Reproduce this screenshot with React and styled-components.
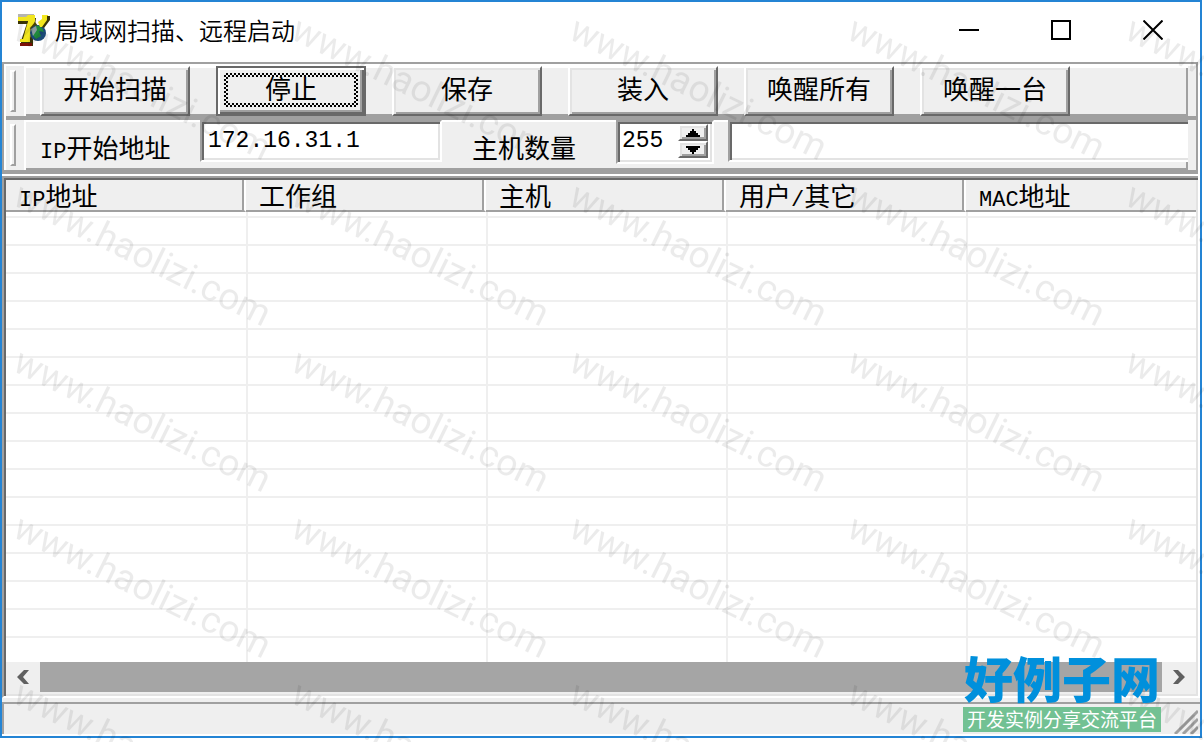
import { useState } from "react";
import styled, { createGlobalStyle, css } from "styled-components";

const commands = ["开始扫描", "停止", "保存", "装入", "唤醒所有", "唤醒一台"];

const columns = [
  { latin: "IP", text: "地址" },
  { text: "工作组" },
  { text: "主机" },
  { text: "用户", latin: "/", after: "其它" },
  { latin: "MAC", text: "地址" },
];

const rows = Array.from({ length: 15 }, (_, i) => i);

const AppIcon = () => (
  <svg width="32" height="32" viewBox="0 0 32 32" aria-hidden="true">
    <path d="M0 0H16V6H0Z" fill="#b5b5b0" />
    <path d="M0 4H18L15 26H15V32H3V27L9 9H0Z" fill="#3a3505" />
    <path d="M0 3H8L10 1H17V7L12 24L12 28H2V25H5L10 7H0Z" fill="#f2e61e" />
    <path d="M0 7H10L9 10H0Z" fill="#3a3505" />
    <path d="M2 29H14V32H2Z" fill="#7c1008" />
    <path d="M12 14L17 8L20 12L14 20Z" fill="#4a4408" />
    <circle cx="20" cy="19" r="8" fill="#1c4a78" />
    <path d="M15 14Q20 9 24 14L26 18L21 17L23 22L18 25L14 20L18 17Z" fill="#1f8a3c" />
    <path d="M13 15L18 12L19 16L15 22Z" fill="#8a9ba0" />
    <path d="M24 1H30V5L25 13H22L20 8L24 5Z" fill="#f2e61e" />
    <path d="M29 2H32V6L26 14L24 13L29 6Z" fill="#3a3505" />
  </svg>
);

const App = () => {
  const [active, setActive] = useState("停止");
  const [startIp, setStartIp] = useState("172.16.31.1");
  const [count, setCount] = useState(255);
  const [filter, setFilter] = useState("");

  return (
    <Page>
      <GlobalStyle />
      <Window>
        <TitleBar>
          <AppIcon />
          <Title>局域网扫描、远程启动</Title>
          <CaptionButton aria-label="最小化">
            <svg width="20" height="20"><path d="M0 10H20" stroke="#000" strokeWidth="2" /></svg>
          </CaptionButton>
          <CaptionButton aria-label="最大化">
            <svg width="20" height="20"><path d="M1 1H19V19H1Z" fill="none" stroke="#000" strokeWidth="2" /></svg>
          </CaptionButton>
          <CaptionButton aria-label="关闭">
            <svg width="20" height="20"><path d="M0.500 0.500L19.500 19.500M19.500 0.500L0.500 19.500" stroke="#000" strokeWidth="2" /></svg>
          </CaptionButton>
        </TitleBar>

        <CoolBar>
          <Band>
            <GripCell><Grip /></GripCell>
            <BandBody>
              <Buttons>
                {commands.map((name) => (
                  <Command key={name} $active={name === active} onClick={() => setActive(name)}>
                    <span>{name}</span>
                  </Command>
                ))}
              </Buttons>
            </BandBody>
          </Band>
          <Band>
            <GripCell><Grip /></GripCell>
            <BandBody>
              <Label htmlFor="start-ip" $width={160}><Latin>IP</Latin>开始地址</Label>
              <TextBox id="start-ip" value={startIp} onChange={(ev) => setStartIp(ev.target.value)} />
              <Label htmlFor="host-count" $width={142} $gap={30}>主机数量</Label>
              <SpinBox>
                <SpinInput id="host-count" value={count} onChange={(ev) => setCount(Number(ev.target.value) || 0)} />
                <SpinButtons>
                  <SpinButton aria-label="增加" onClick={() => setCount(count + 1)}>
                    <svg width="14" height="8"><path d="M6 0H8V2H10V4H12V6H14V8H0V6H2V4H4V2H6Z" /></svg>
                  </SpinButton>
                  <SpinButton aria-label="减少" onClick={() => setCount(count - 1)}>
                    <svg width="14" height="8"><path d="M0 0H14V2H12V4H10V6H8V8H6V6H4V4H2V2H0Z" /></svg>
                  </SpinButton>
                </SpinButtons>
              </SpinBox>
              <WideBox aria-label="状态" value={filter} onChange={(ev) => setFilter(ev.target.value)} />
            </BandBody>
          </Band>
        </CoolBar>

        <ListView>
          <Table>
            <colgroup>
              <col width="240" /><col width="240" /><col width="240" /><col width="240" /><col />
            </colgroup>
            <thead>
              <tr>
                {columns.map((col, i) => (
                  <HeadCell key={i}>
                    {col.after && col.text}
                    {col.latin && <Latin>{col.latin}</Latin>}
                    {col.after || col.text}
                  </HeadCell>
                ))}
              </tr>
            </thead>
            <tbody>
              <Row $height={6}>{columns.map((_, i) => <Cell key={i} />)}</Row>
              {rows.map((row) => (
                <Row key={row} $height={28}>{columns.map((_, i) => <Cell key={i} />)}</Row>
              ))}
              <Row $height={24} $last>{columns.map((_, i) => <Cell key={i} />)}</Row>
            </tbody>
          </Table>
          <ScrollBar>
            <ScrollButton aria-label="向左滚动">
              <svg width="12" height="14"><path d="M12 0H7L0 7L7 14H12L6 7Z" fill="#606060" /></svg>
            </ScrollButton>
            <Thumb />
            <ScrollButton aria-label="向右滚动">
              <svg width="12" height="14"><path d="M0 0H5L12 7L5 14H0L6 7Z" fill="#606060" /></svg>
            </ScrollButton>
          </ScrollBar>
        </ListView>

        <StatusBar>
          <svg width="24" height="24" aria-hidden="true">
            <path d="M1 24L24 1M9 24L24 9M17 24L24 17" stroke="#a0a0a0" strokeWidth="3" />
          </svg>
        </StatusBar>
      </Window>

      <Watermark aria-hidden="true">
        <defs>
          <pattern id="mark" x="8" width="278" height="166" patternUnits="userSpaceOnUse">
            {[0, -166].map((y) => (
              <text key={y} transform={`translate(3 ${y + 38}) rotate(26)`}>www.haolizi.com</text>
            ))}
          </pattern>
        </defs>
        <rect width="100%" height="100%" fill="url(#mark)" />
      </Watermark>

      <Brand>
        <BrandName>好例子网</BrandName>
        <BrandLine>开发实例分享交流平台</BrandLine>
      </Brand>
    </Page>
  );
};

const GlobalStyle = createGlobalStyle`
  * { box-sizing: border-box; }
  body { margin: 0; background: #fff; }
  button, input { font: inherit; color: inherit; margin: 0; padding: 0; border: 0; border-radius: 0; outline: 0; }
  svg { display: block; flex: none; }
`;

const sunken = css`
  border: 2px solid;
  border-color: #a0a0a0 #fff #fff #a0a0a0;
  box-shadow: inset 2px 2px #696969, inset -2px -2px #e3e3e3;
  background: #fff;
`;

const raised = css`
  border: 2px solid;
  border-color: #fff #696969 #696969 #fff;
  box-shadow: inset 2px 2px #e3e3e3, inset -2px -2px #a0a0a0;
  background: #efefef;
`;

const Page = styled.div`
  position: relative;
  height: 100vh;
  padding: 0 2px 4px 0;
  overflow: hidden;
  font-family: "Noto Sans CJK SC", sans-serif;
  font-size: 26px;
  font-weight: 400;
  color: #000;
`;

const Window = styled.div`
  height: 100%;
  display: flex;
  flex-direction: column;
  border: 2px solid #2484d4;
  background: #fff;
`;

const TitleBar = styled.header`
  height: 60px;
  flex: none;
  display: flex;
  align-items: center;
  padding: 0 1px 4px 16px;
`;

const Title = styled.h1`
  flex: 1;
  margin: 0 0 0 5px;
  font-size: 24px;
  line-height: 32px;
  font-weight: 350;
`;

const CaptionButton = styled.button`
  width: 92px;
  height: 56px;
  display: flex;
  align-items: center;
  justify-content: center;
  background: none;
`;

const CoolBar = styled.div`
  flex: none;
  margin-right: 2px;
  border: 2px solid #a0a0a0;
  border-bottom-width: 4px;
  padding: 2px 0 0 2px;
`;

const Band = styled.div`
  display: flex;
  height: 50px;

  & + & {
    margin-top: 4px;
    box-shadow: 0 -4px #a0a0a0, 0 -2px #fff;
  }
`;

const GripCell = styled.div`
  width: 18px;
  padding: 4px;
  background: #efefef;
`;

const Grip = styled.div`
  width: 6px;
  height: 42px;
  border: 2px solid;
  border-color: #fff #a0a0a0 #a0a0a0 #fff;
`;

const BandBody = styled.div`
  flex: 1;
  min-width: 0;
  display: flex;
  align-items: flex-start;
  margin-right: 8px;
  padding-left: 16px;
  background: #efefef;
  box-shadow: inset 2px 2px #fff, inset -2px -2px #a0a0a0, 8px 0 #efefef;
`;

const Buttons = styled.div`
  display: flex;
  gap: 26px;
`;

const Command = styled.button`
  width: 150px;
  height: 50px;
  line-height: 32px;
  padding-bottom: 6px;
  white-space: nowrap;
  ${raised}

  ${(p) => p.$active && css`
    padding: 2px 6px 4px;
    border-color: #696969;
    box-shadow: inset 2px 2px #fff, inset -2px -2px #696969, inset -4px -4px #a0a0a0;

    span {
      display: block;
      height: 34px;
      line-height: 22px;
      border: 4px solid transparent;
      background:
        linear-gradient(#efefef, #efefef) padding-box,
        repeating-conic-gradient(#000 0 25%, #efefef 0 50%) 0 0 / 4px 4px border-box;
    }
  `}
`;

const Label = styled.label`
  width: ${(p) => p.$width}px;
  padding: 11px 0 0 ${(p) => p.$gap || 0}px;
  line-height: 32px;
  white-space: nowrap;
`;

const Latin = styled.span`
  font-family: "Liberation Mono", monospace;
  font-size: 22px;
  line-height: 0;
`;

const TextBox = styled.input`
  width: 242px;
  height: 42px;
  padding: 0 6px;
  font-family: "Liberation Mono", monospace;
  font-size: 23px;
  ${sunken}
`;

const SpinBox = styled.div`
  display: flex;
  width: 98px;
  height: 44px;
  margin-left: 32px;
  padding: 2px 4px;
  ${sunken}
`;

const SpinInput = styled.input`
  flex: 1;
  min-width: 0;
  height: 34px;
  background: none;
  font-family: "Liberation Mono", monospace;
  font-size: 23px;
`;

const SpinButtons = styled.div`
  width: 30px;
  height: 34px;
`;

const SpinButton = styled.button`
  width: 30px;
  height: 17px;
  display: flex;
  align-items: center;
  justify-content: center;
  ${raised}
`;

const WideBox = styled(TextBox)`
  flex: 1;
  min-width: 0;
  margin-left: 14px;
  border-right: 0;
  box-shadow: inset 2px 2px #696969, inset 0 -2px #e3e3e3;
`;

const ListView = styled.main`
  flex: 1;
  min-height: 0;
  display: flex;
  flex-direction: column;
  margin: 2px 2px 0 0;
  padding: 2px;
  ${sunken}
  border-right: 0;
`;

const Table = styled.table`
  width: 100%;
  table-layout: fixed;
  border-collapse: separate;
  border-spacing: 0;
`;

const HeadCell = styled.th`
  height: 32px;
  padding: 0 0 0 13px;
  line-height: 28px;
  font-weight: 400;
  text-align: left;
  white-space: nowrap;
  background: #efefef;
  border-bottom: 2px solid #a0a0a0;
  border-right: 2px solid #fff;
  box-shadow: inset -2px 0 #a0a0a0;

  &:last-child {
    border-right: 0;
    box-shadow: none;
  }
`;

const Cell = styled.td`
  padding: 0;
  border-bottom: 2px solid #efefef;

  & + & {
    border-left: 2px solid #efefef;
  }
`;

const Row = styled.tr`
  height: ${(p) => p.$height}px;

  ${(p) => p.$last && css`
    ${Cell} { border-bottom: 0; }
  `}
`;

const ScrollBar = styled.div`
  display: flex;
  flex: none;
  height: 32px;
  margin-top: auto;
  padding-bottom: 2px;
  background: #efefef;
`;

const ScrollButton = styled.button`
  width: 34px;
  display: flex;
  align-items: center;
  justify-content: center;
  background: #efefef;
`;

const Thumb = styled.div`
  flex: 1;
  background: #a5a5a5;
`;

const StatusBar = styled.footer`
  flex: none;
  display: flex;
  justify-content: flex-end;
  align-items: flex-end;
  height: 38px;
  border-top: 4px solid #efefef;
  border-bottom: 2px solid #fff;
  padding-right: 2px;
  background: #efefef;
  box-shadow: inset 2px 2px #a0a0a0;
`;

const Watermark = styled.svg`
  position: absolute;
  inset: 0;
  width: 100%;
  height: 100%;
  pointer-events: none;

  text {
    font: 400 37px Roboto, sans-serif;
    fill: #000;
    fill-opacity: 0.08;
  }
`;

const Brand = styled.div`
  position: absolute;
  right: 43px;
  bottom: 10px;
  text-align: center;
  white-space: nowrap;
`;

const BrandName = styled.div`
  font-size: 49px;
  line-height: 60px;
  font-weight: 900;
  color: #0090dc;
`;

const BrandLine = styled.div`
  height: 25px;
  padding: 0 4px;
  font-size: 19px;
  line-height: 24px;
  font-weight: 400;
  color: #fff;
  background: #72c193;
`;

export default App;
